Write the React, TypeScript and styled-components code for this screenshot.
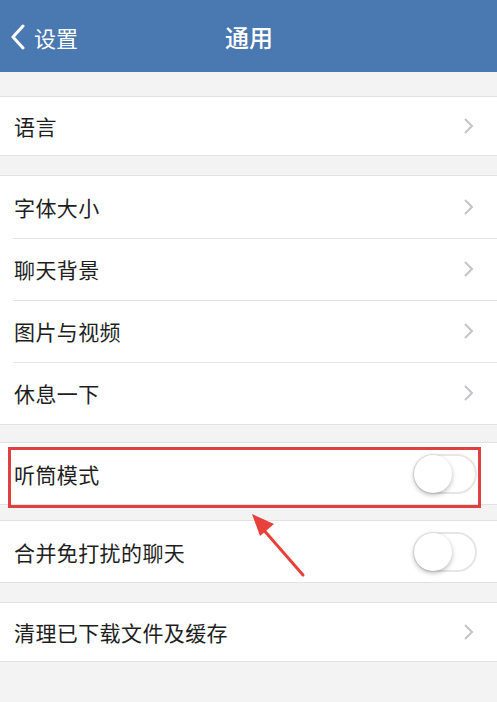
import React from "react";
import styled, { createGlobalStyle } from "styled-components";

type Item = { label: string; kind: "link" | "switch"; marked?: boolean };
type Section = { gap: number; rowH: number; items: Item[] };

const sections: Section[] = [
	{ gap: 24, rowH: 58, items: [{ label: "语言", kind: "link" }] },
	{
		gap: 19,
		rowH: 62,
		items: [
			{ label: "字体大小", kind: "link" },
			{ label: "聊天背景", kind: "link" },
			{ label: "图片与视频", kind: "link" },
			{ label: "休息一下", kind: "link" },
		],
	},
	{ gap: 17, rowH: 61, items: [{ label: "听筒模式", kind: "switch", marked: true }] },
	{ gap: 15, rowH: 61, items: [{ label: "合并免打扰的聊天", kind: "switch" }] },
	{ gap: 19, rowH: 58, items: [{ label: "清理已下载文件及缓存", kind: "link" }] },
];

const Chevron = () => (
	<svg width="12" height="20" viewBox="0 0 12 20">
		<path d="M2 3 L9 10 L2 17" fill="none" stroke="#c4c4c8" strokeWidth="2" />
	</svg>
);

const BackArrow = () => (
	<svg width="16" height="26" viewBox="0 0 16 26">
		<path d="M13 2 L3 13 L13 24" fill="none" stroke="#fff" strokeWidth="3" strokeLinecap="round" strokeLinejoin="round" />
	</svg>
);

const App: React.FC = () => {
	return (
		<>
			<GlobalStyle />
			<Page>
				<Header>
					<Back>
						<BackArrow />
						<span>设置</span>
					</Back>
					<Title>通用</Title>
				</Header>
				{sections.map((section, gi) => (
					<Group key={gi} $gap={section.gap}>
						{section.items.map((item, i) => (
							<Row key={item.label} $h={section.rowH} $divider={i > 0}>
								<Label>{item.label}</Label>
								{item.kind === "link" ? (
									<Chevron />
								) : (
									<Toggle>
										<Knob />
									</Toggle>
								)}
								{item.marked && <Mark />}
							</Row>
						))}
					</Group>
				))}
				<Arrow width="70" height="80" viewBox="0 0 70 80">
					<path d="M57 67 L16 20" stroke="#e8403a" strokeWidth="3" strokeLinecap="round" />
					<path d="M6 6 L28 16 L14 28 Z" fill="#e8403a" />
				</Arrow>
			</Page>
		</>
	);
};

// ================== styles ========================
const GlobalStyle = createGlobalStyle`
	html, body {
		margin: 0;
		padding: 0;
		background: #f3f3f3;
	}
	body {
		font-family: "Noto Sans CJK SC", "Noto Sans", sans-serif;
	}
`;

const Page = styled.div`
	position: relative;
	width: 497px;
	height: 702px;
	overflow: hidden;
	background: #f3f3f3;
`;

const Header = styled.div`
	position: relative;
	height: 72px;
	background: #4a78b1;
	display: flex;
	align-items: center;
	justify-content: center;
	color: #fff;
`;

const Back = styled.div`
	position: absolute;
	left: 10px;
	top: 0;
	bottom: 0;
	display: flex;
	align-items: center;
	gap: 8px;
	font-size: 22px;
	padding-top: 1px;
`;

const Title = styled.div`
	font-size: 24px;
	font-weight: 500;
	padding-top: 1px;
	padding-left: 1px;
`;

const Group = styled.div<{ $gap: number }>`
	margin-top: ${({ $gap }) => $gap}px;
	background: #fff;
	border-top: 1px solid #e2e2e2;
	border-bottom: 1px solid #e2e2e2;
`;

const Row = styled.div<{ $h: number; $divider: boolean }>`
	position: relative;
	height: ${({ $h }) => $h}px;
	display: flex;
	align-items: center;
	justify-content: space-between;
	padding: 0 22px 0 14px;
	box-sizing: border-box;
	${({ $divider }) =>
		$divider &&
		`
		&::before {
			content: "";
			position: absolute;
			left: 13px;
			right: 0;
			top: 0;
			border-top: 1px solid #e4e4e4;
		}
	`}
`;

const Label = styled.span`
	font-size: 21px;
	color: #1e1e1e;
	letter-spacing: 0.4px;
`;

const Toggle = styled.div`
	width: 64px;
	height: 40px;
	margin-right: -2px;
	border-radius: 20px;
	border: 2px solid #e6e6e6;
	box-sizing: border-box;
	background: #fff;
	position: relative;
`;

const Knob = styled.div`
	position: absolute;
	left: -1px;
	top: -1px;
	width: 38px;
	height: 38px;
	border-radius: 50%;
	background: #fff;
	box-shadow: 0 2px 5px rgba(0, 0, 0, 0.28);
`;

const Mark = styled.div`
	position: absolute;
	left: 8px;
	right: 16px;
	top: 4px;
	bottom: -4px;
	border: 3px solid #e0403f;
	pointer-events: none;
`;

const Arrow = styled.svg`
	position: absolute;
	left: 246px;
	top: 508px;
`;

export default App;
